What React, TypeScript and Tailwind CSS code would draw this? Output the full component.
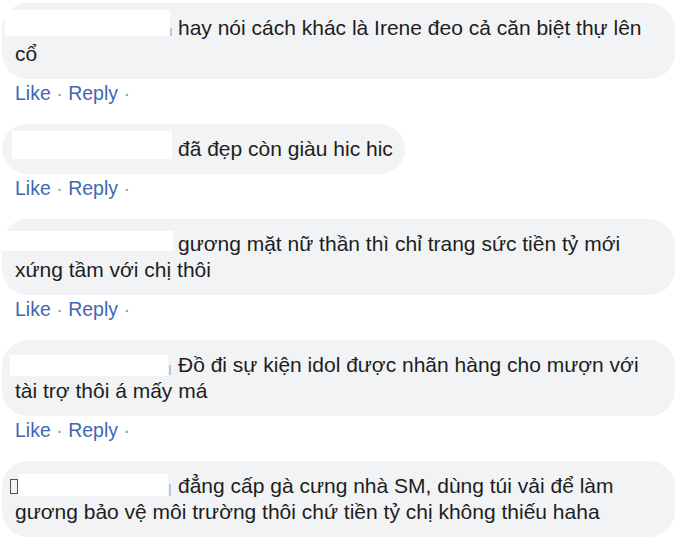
import React from "react";

type Redact = { left: number; top: number; w: number; h: number };

type Comment = {
  lines: string[];
  full: boolean;
  boxes: Redact[];
  slivers?: Redact[];
  tofu?: Redact;
};

const comments: Comment[] = [
  {
    lines: ["hay nói cách khác là Irene đeo cả căn biệt thự lên", "cổ"],
    full: true,
    boxes: [{ left: 3, top: 7, w: 165, h: 26 }],
    slivers: [{ left: 168, top: 25, w: 2, h: 8 }],
  },
  {
    lines: ["đã đẹp còn giàu hic hic"],
    full: false,
    boxes: [{ left: 10, top: 7, w: 160, h: 28 }],
  },
  {
    lines: ["gương mặt nữ thần thì chỉ trang sức tiền tỷ mới", "xứng tầm với chị thôi"],
    full: true,
    boxes: [{ left: -2, top: 12, w: 173, h: 20 }],
  },
  {
    lines: ["Đồ đi sự kiện idol được nhãn hàng cho mượn với", "tài trợ thôi á mấy má"],
    full: true,
    boxes: [{ left: 8, top: 15, w: 158, h: 21 }],
    slivers: [{ left: 167, top: 25, w: 2, h: 10 }],
  },
  {
    lines: [
      "đẳng cấp gà cưng nhà SM, dùng túi vải để làm",
      "gương bảo vệ môi trường thôi chứ tiền tỷ chị không thiếu haha",
    ],
    full: true,
    boxes: [{ left: 16, top: 13, w: 150, h: 22 }],
    slivers: [{ left: 167, top: 23, w: 2, h: 12 }],
    tofu: { left: 8, top: 18, w: 8, h: 15 },
  },
];

function Bubble({ c }: { c: Comment }) {
  return (
    <div
      className={
        "relative ml-[2px] flex flex-col rounded-[26px] bg-[#f2f3f5] py-3 pl-[13px] pr-3 text-[21px] leading-[26px] text-[#1c1e21] " +
        (c.full ? "w-[673px]" : "w-fit")
      }
    >
      {c.lines.map((l, i) => (
        <div key={i} className="whitespace-nowrap">
          {i === 0 && <span className="inline-block w-[163px]" />}
          {l}
        </div>
      ))}
      {c.boxes.map((b, i) => (
        <div
          key={"b" + i}
          className="absolute bg-white"
          style={{ left: b.left, top: b.top, width: b.w, height: b.h }}
        />
      ))}
      {c.slivers?.map((b, i) => (
        <div
          key={"s" + i}
          className="absolute bg-[#b9c6e3]"
          style={{ left: b.left, top: b.top, width: b.w, height: b.h }}
        />
      ))}
      {c.tofu && (
        <div
          className="absolute border border-[#555]"
          style={{ left: c.tofu.left, top: c.tofu.top, width: c.tofu.w, height: c.tofu.h }}
        />
      )}
    </div>
  );
}

export default function App() {
  return (
    <div
      className="flex h-[537px] w-[699px] flex-col gap-[17px] overflow-hidden bg-white pt-[3px]"
      style={{ fontFamily: '"Liberation Sans", Arial, sans-serif' }}
    >
      {comments.map((c, i) => (
        <div key={i} className="flex flex-col">
          <Bubble c={c} />
          {i < comments.length - 1 && (
            <div className="h-[28px] pl-[15px] text-[19.5px] leading-[28px]">
              <span className="text-[#4267b2]">Like</span>
              <span className="text-[#8d98b5]"> · </span>
              <span className="text-[#4267b2]">Reply</span>
              <span className="text-[#8d98b5]"> ·</span>
            </div>
          )}
        </div>
      ))}
    </div>
  );
}
